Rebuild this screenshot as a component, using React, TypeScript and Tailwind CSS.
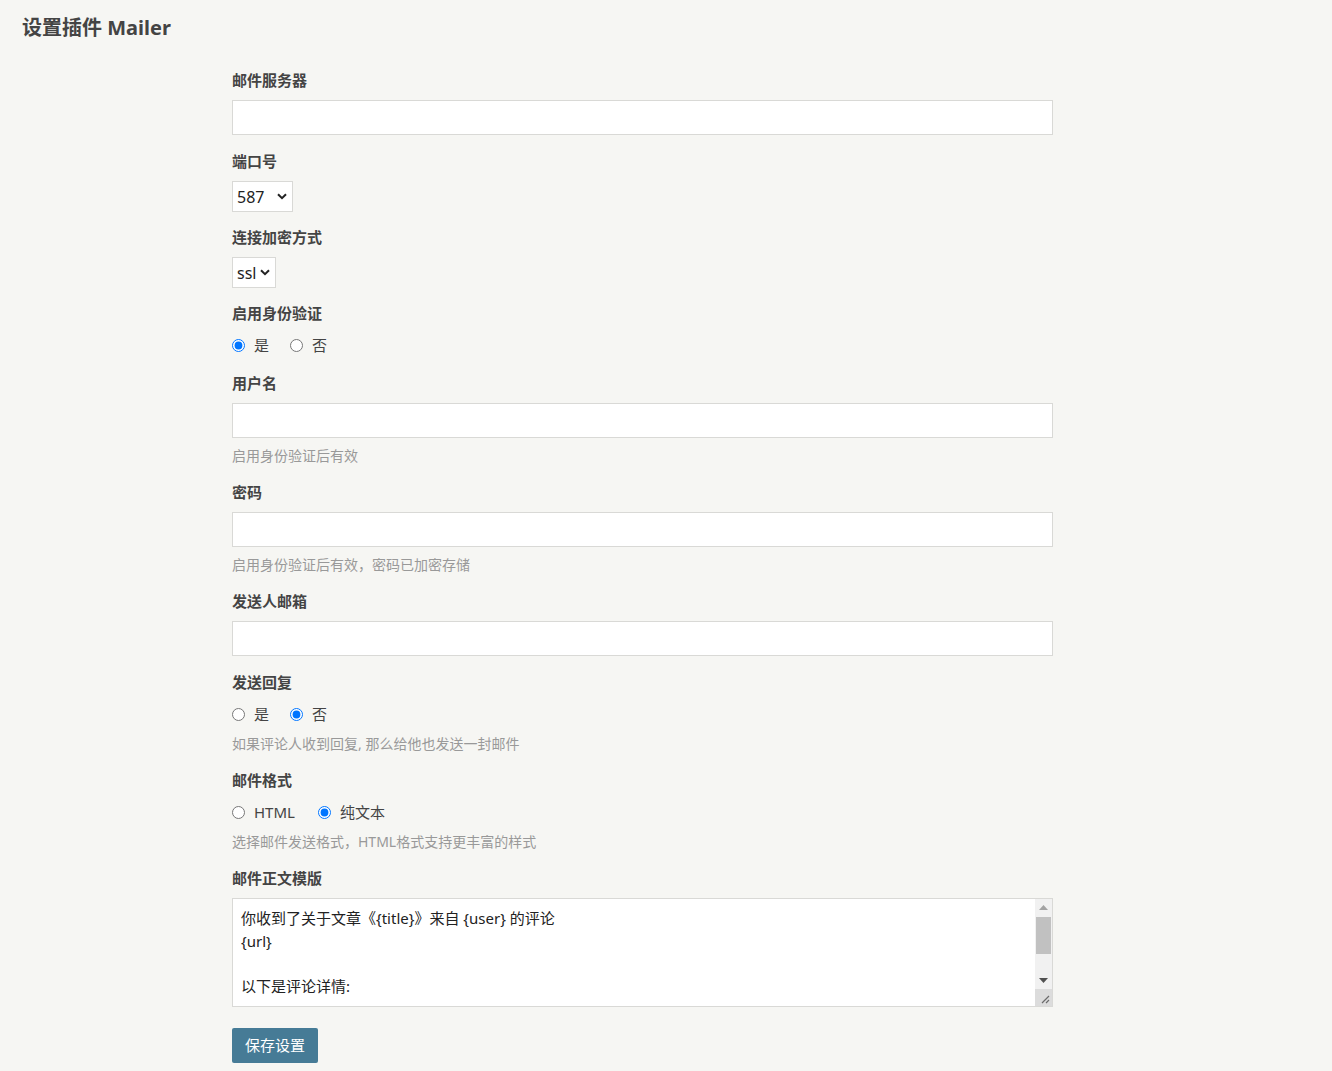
import React from "react";

const font = "font-['Noto_Sans','Noto_Sans_CJK_SC',sans-serif]";

const template = `你收到了关于文章《{title}》来自 {user} 的评论
{url}

以下是评论详情:

{text}

-------
{site}
{time}`;

function Label({ children }: { children: React.ReactNode }) {
  return (
    <label className="mb-[9px] block text-[15px] font-bold leading-[21px] text-[#444]">
      {children}
    </label>
  );
}

function Help({ children }: { children: React.ReactNode }) {
  return (
    <p className="mt-[8px] text-[14px] leading-[20px] text-[#999]">{children}</p>
  );
}

function TextInput() {
  return (
    <input
      type="text"
      className="block h-[35px] w-full border border-[#d9d9d6] bg-white px-2 text-[15px] outline-none"
    />
  );
}

function Radios({
  name,
  options,
  checked,
  gap = "gap-[21px]",
}: {
  name: string;
  options: string[];
  checked: number;
  gap?: string;
}) {
  return (
    <div className={`flex h-[24px] items-center ${gap} text-[15px] text-[#444]`}>
      {options.map((o, i) => (
        <label key={o} className="flex items-center gap-[9px]">
          <input
            type="radio"
            name={name}
            defaultChecked={i === checked}
            className="m-0 h-[13px] w-[13px]"
          />
          <span>{o}</span>
        </label>
      ))}
    </div>
  );
}

function Select({ options, width }: { options: string[]; width: string }) {
  return (
    <div className={`relative ${width}`}>
      <select className="block h-[31px] w-full appearance-none border border-[#d9d9d6] bg-white pl-[4px] pr-[18px] text-[16px] text-[#222] outline-none">
        {options.map((o) => (
          <option key={o}>{o}</option>
        ))}
      </select>
      <svg
        className="pointer-events-none absolute top-[12px] right-[6px]"
        width="10"
        height="7"
        viewBox="0 0 10 7"
      >
        <path d="M1 1.2 L5 5.2 L9 1.2" stroke="#222" strokeWidth="2" fill="none" />
      </svg>
    </div>
  );
}

function FakeScrollbar() {
  return (
    <div className="pointer-events-none absolute top-[1px] right-[1px] bottom-[1px] flex w-[17px] flex-col bg-[#f1f1f1]">
      <div className="flex h-[17px] items-center justify-center">
        <svg width="9" height="5" viewBox="0 0 9 5">
          <path d="M0 5 L4.5 0 L9 5 Z" fill="#a3a3a3" />
        </svg>
      </div>
      <div className="mx-[1px] mt-[1px] h-[37px] bg-[#c1c1c1]" />
      <div className="flex-1" />
      <div className="flex h-[17px] items-center justify-center">
        <svg width="9" height="5" viewBox="0 0 9 5">
          <path d="M0 0 L9 0 L4.5 5 Z" fill="#505050" />
        </svg>
      </div>
      <div className="flex h-[17px] items-end justify-end bg-[#dcdcdc] p-[2px]">
        <svg width="10" height="10" viewBox="0 0 10 10">
          <path d="M9 2 L2 9 M9 6 L6 9" stroke="#6b6b6b" strokeWidth="1.2" fill="none" />
        </svg>
      </div>
    </div>
  );
}

export default function App() {
  return (
    <div className={`min-h-[1071px] bg-[#f6f6f3] ${font} text-[#444]`}>
      <h2 className="px-[22px] pt-[15px] text-[20px] font-bold leading-[26px] text-[#444]">
        设置插件 Mailer
      </h2>
      <form
        className="ml-[232px] flex w-[821px] flex-col gap-[16px] pt-[29px] pb-[8px]"
        onSubmit={(e) => e.preventDefault()}
      >
        <div>
          <Label>邮件服务器</Label>
          <TextInput />
        </div>
        <div>
          <Label>端口号</Label>
          <Select options={["587", "25", "465"]} width="w-[61px]" />
        </div>
        <div className="-mt-[1px]">
          <Label>连接加密方式</Label>
          <Select options={["ssl", "tls"]} width="w-[44px]" />
        </div>
        <div className="-mt-[1px]">
          <Label>启用身份验证</Label>
          <Radios name="auth" options={["是", "否"]} checked={0} />
        </div>
        <div>
          <Label>用户名</Label>
          <TextInput />
          <Help>启用身份验证后有效</Help>
        </div>
        <div>
          <Label>密码</Label>
          <TextInput />
          <Help>启用身份验证后有效，密码已加密存储</Help>
        </div>
        <div>
          <Label>发送人邮箱</Label>
          <TextInput />
        </div>
        <div>
          <Label>发送回复</Label>
          <Radios name="reply" options={["是", "否"]} checked={1} />
          <Help>如果评论人收到回复, 那么给他也发送一封邮件</Help>
        </div>
        <div>
          <Label>邮件格式</Label>
          <Radios name="format" options={["HTML", "纯文本"]} checked={1} gap="gap-[23px]" />
          <Help>选择邮件发送格式，HTML格式支持更丰富的样式</Help>
        </div>
        <div>
          <Label>邮件正文模版</Label>
          <div className="relative">
            <textarea
              defaultValue={template}
              className="block h-[109px] w-full resize-none border border-[#d9d9d6] bg-white py-[8px] pr-[26px] pl-[8px] text-[15px] leading-[22.7px] text-[#222] outline-none [scrollbar-width:none]"
            />
            <FakeScrollbar />
          </div>
        </div>
        <div className="pt-[5px]">
          <button
            type="submit"
            className="h-[35px] rounded-[2px] bg-[#467b96] px-[13px] text-[15px] text-white"
          >
            保存设置
          </button>
        </div>
      </form>
    </div>
  );
}
